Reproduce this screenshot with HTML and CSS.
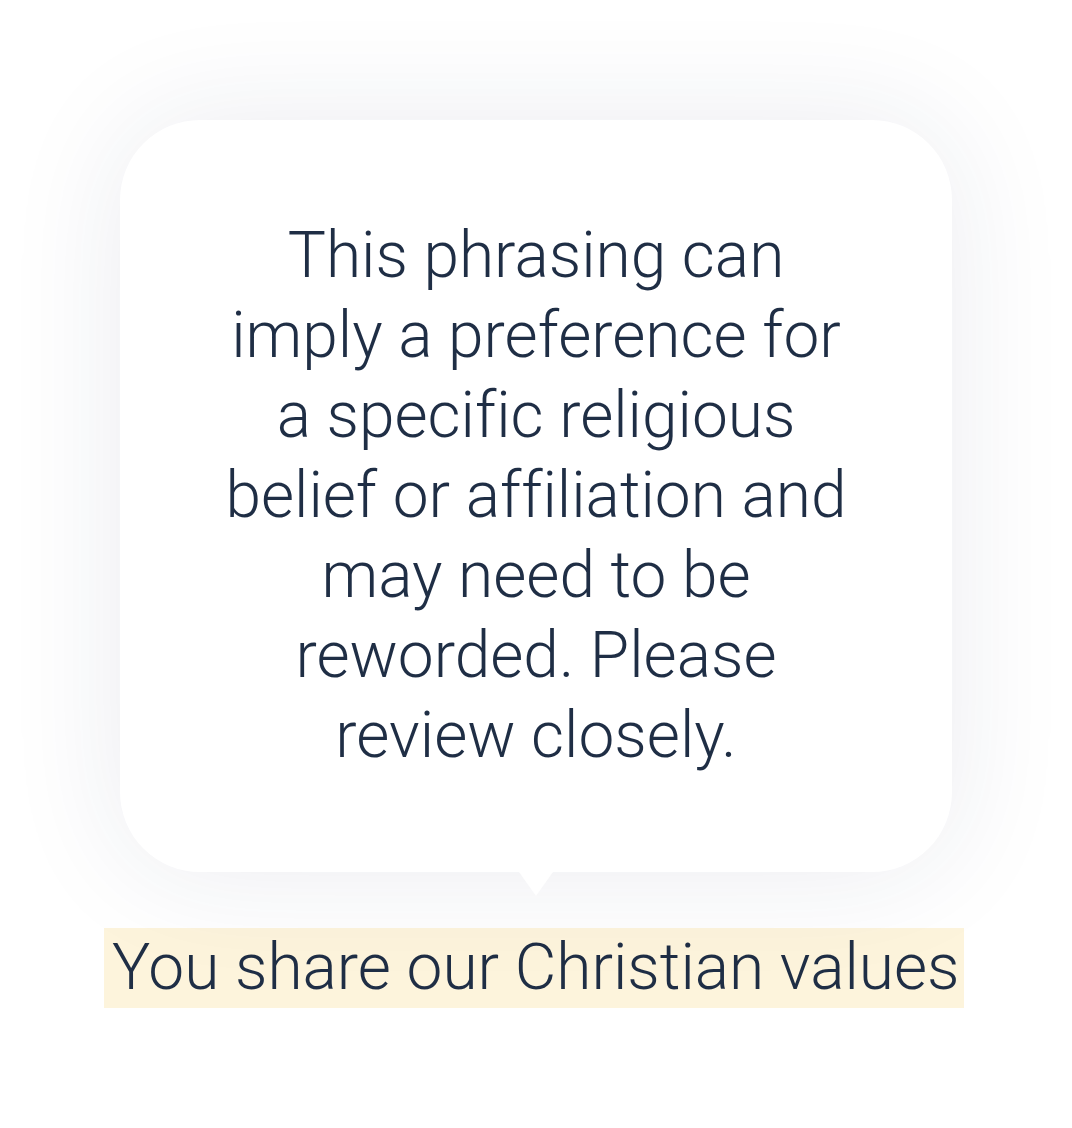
FILE: index.html
```html
<!DOCTYPE html>
<html lang="en">
<head>
    <meta charset="UTF-8">
    <meta name="viewport" content="width=device-width, initial-scale=1.0">
    <title>Wording suggestion</title>
    <link rel="stylesheet" href="styles.css">
</head>
<body>
    <main class="suggestion">
        <div class="tooltip" role="tooltip" id="wording-tip">
            <p>This phrasing can imply a preference for a specific religious belief or affiliation and may need to be reworded. Please review closely.</p>
        </div>
        <p class="sentence"><mark aria-describedby="wording-tip">You share our Christian values</mark></p>
    </main>
</body>
</html>
```

FILE: styles.css
```css
* {
    box-sizing: border-box;
    margin: 0;
    padding: 0;
}
body {
    font-family: Roboto, sans-serif;
    font-weight: 300;
    font-size: 64px;
    line-height: 80px;
    font-variant-ligatures: none;
    background-color: white;
    color: #1f2e45;
}
.suggestion {
    display: flex;
    flex-direction: column;
    align-items: center;
    padding: 120px 104px;
}
.tooltip {
    position: relative;
    width: 100%;
    max-width: 832px;
    padding: 96px 104px;
    border-radius: 80px;
    background-color: white;
    box-shadow: 0 0 120px rgba(31, 46, 90, 0.09);
    text-align: center;
}
/* arrow pointing at the flagged words */
.tooltip::after {
    content: "";
    position: absolute;
    top: 100%;
    left: 50%;
    margin-left: -17px;
    border: 17px solid transparent;
    border-top: 24px solid white;
    border-bottom: 0;
}
.sentence {
    align-self: flex-start;
    margin-top: 56px;
    white-space: nowrap;
}
.sentence mark {
    display: block;
    padding: 0 4px 0 8px;
    background-color: #fdf4dc;
    color: inherit;
}
```
